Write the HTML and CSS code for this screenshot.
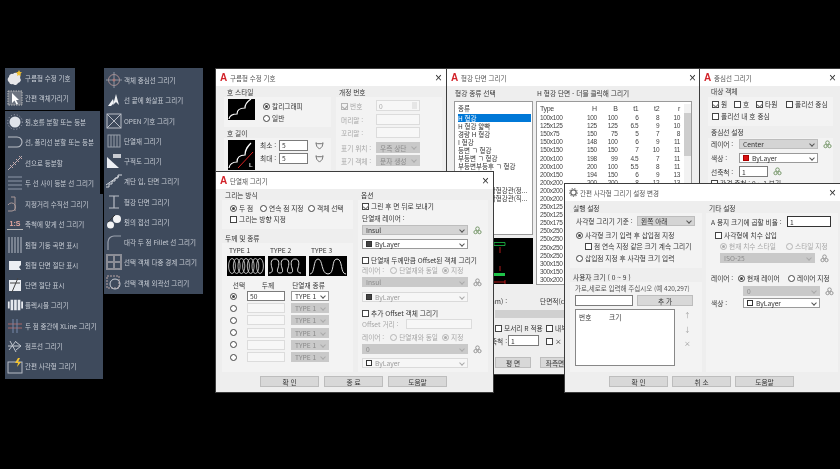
FILE: index.html
```html
<!DOCTYPE html>
<html lang="ko">
<head>
<meta charset="utf-8">
<title>AutoCAD 도구 모음</title>
<link rel="stylesheet" href="styles.css">
</head>
<body>
<svg class="defs" width="0" height="0">
  <symbol id="lay" viewBox="0 0 10 10"><circle cx="5" cy="3" r="2" fill="none" stroke="currentColor"/><circle cx="2.800" cy="6.800" r="1.800" fill="none" stroke="currentColor"/><circle cx="7.200" cy="6.800" r="1.800" fill="none" stroke="currentColor"/></symbol>
</svg>
<main class="stage">

  <nav class="bar t1">
    <div class="it"><svg viewBox="0 0 16 16"><path d="M2 7a3 3 0 0 1 4-3 3 3 0 0 1 5 0 3 3 0 0 1 2 4 3 3 0 0 1-2 5 3 3 0 0 1-5 1 3 3 0 0 1-4-2 3 3 0 0 1 0-5z" fill="#e8e8ea"/><path d="M12 0l1 2 2 .3-1.500 1.400.4 2.200-1.900-1-1.900 1 .4-2.200L9 2.300 11 2z" fill="#f2c230"/></svg><span>구름형 수정 기호</span></div>
    <div class="it"><svg viewBox="0 0 16 16"><rect x="1" y="1" width="14" height="14" fill="#6d7480" stroke="#bbb" stroke-dasharray="1.500 1"/><path d="M5 3v10l2.500-2.500 2 4 1.500-.8-2-3.700H12z" fill="#fff"/></svg><span>간편 객체가리기</span></div>
  </nav>

  <nav class="bar t2">
    <div class="it"><svg viewBox="0 0 16 16"><circle cx="8" cy="8" r="5.500" fill="#dfe3ea"/><circle cx="8" cy="8" r="7.300" fill="none" stroke="#aab" stroke-dasharray="1 2"/></svg><span>원,호를 분할 또는 등분</span></div>
    <div class="it"><svg viewBox="0 0 16 16"><path d="M1 3h9a5 5 0 0 1 0 10H1" fill="none" stroke="#b9bdc6" stroke-width="1.100"/></svg><span>선, 폴리선 분할 또는 등분</span></div>
    <div class="it"><svg viewBox="0 0 16 16"><path d="M1 15L15 1" stroke="#b9b2b8"/><path d="M3 10l3 3M6 7l3 3M9 4l3 3M12 1l3 3" stroke="#c8a8a8"/></svg><span>선으로 등분할</span></div>
    <div class="it"><svg viewBox="0 0 16 16"><path d="M1 2h14M1 6h14M1 10h14M1 14h14" stroke="#8d97a8"/></svg><span>두 선 사이 등분 선 그리기</span></div>
  </nav>

  <nav class="bar t3">
    <div class="it"><svg viewBox="0 0 16 16"><path d="M4 1h4v14M1 9a4 4 0 0 1 7 0 4 4 0 0 1-3 6H1" fill="none" stroke="#a99"/></svg><span>지정거리 수직선 그리기</span></div>
    <div class="it"><em class="ratio">1:S</em><span>축척에 맞게 선 그리기</span></div>
    <div class="it"><svg viewBox="0 0 16 16"><path d="M2 0v16M5 0v16M8 0v16M11 0v16M14 0v16" stroke="#9aa1ae" stroke-width="1.300"/></svg><span>원형 기둥 곡면 표시</span></div>
    <div class="it"><svg viewBox="0 0 16 16"><path d="M2 4h12v4l-2 2 2 3H2z" fill="#eceff3"/></svg><span>원형 단면 절단 표시</span></div>
    <div class="it"><svg viewBox="0 0 16 16"><rect x="2" y="3" width="12" height="11" fill="#eceff3"/><path d="M11 1L5 15M3 6h10" stroke="#444"/></svg><span>단면 절단 표시</span></div>
    <div class="it"><svg viewBox="0 0 18 16"><path d="M1 4h2v8H1zM4 2h3v12H4zM8 2h3v12H8zM12 2h3v12h-3zM16 4h2v8h-2z" fill="#e6e9ee"/></svg><span>플렉시블 그리기</span></div>
    <div class="it"><svg viewBox="0 0 16 16"><path d="M1 6h14M1 10h14" stroke="#a66"/><path d="M6 1v14M10 1v14" stroke="#78a"/></svg><span>두 점 중간에 XLine 그리기</span></div>
    <div class="it"><svg viewBox="0 0 16 16"><path d="M1 8h13M9 4l5 4-5 4M2 12l7-9M3 3l6 11" fill="none" stroke="#c3c8d0"/></svg><span>점프선 그리기</span></div>
    <div class="it"><svg viewBox="0 0 16 16"><rect x="1" y="4" width="14" height="11" fill="none" stroke="#b7bcc6"/><path d="M11 0L8 5h3l-1 4 4-5h-3l2-4z" fill="#f2c230"/></svg><span>간편 사각형 그리기</span></div>
  </nav>

  <nav class="bar t4">
    <div class="it"><svg viewBox="0 0 16 16"><circle cx="8" cy="8" r="5.500" fill="none" stroke="#a98d8f"/><path d="M8 0v16M0 8h16" stroke="#8f95a2"/><circle cx="8" cy="8" r="1.500" fill="#a77"/></svg><span>객체 중심선 그리기</span></div>
    <div class="it"><svg viewBox="0 0 16 16"><path d="M10 2L7 13l3-3 3 3zM2 14l5-7 1 4-3 3z" fill="#f0f2f5"/></svg><span>선 끝에 화살표 그리기</span></div>
    <div class="it"><svg viewBox="0 0 16 16"><rect x="1" y="1" width="14" height="14" fill="none" stroke="#b9bdc6"/><path d="M1 1l14 14M15 1L1 15" stroke="#b9bdc6"/></svg><span>OPEN 기호 그리기</span></div>
    <div class="it"><svg viewBox="0 0 16 16"><rect x="2" y="2" width="12" height="12" fill="none" stroke="#989faa"/><path d="M5 2v12M8 2v12M11 2v12" stroke="#989faa"/></svg><span>단열재 그리기</span></div>
    <div class="it"><svg viewBox="0 0 16 16"><path d="M1 4v11h12z" fill="#eceff3"/><rect x="7" y="1" width="8" height="4" fill="#c9ccd2"/></svg><span>구적도 그리기</span></div>
    <div class="it"><svg viewBox="0 0 16 16"><path d="M0 14h3v-3h3V8h3V5h3V2h4M0 12l13-9" fill="none" stroke="#d3d6dc"/></svg><span>계단 입, 단면 그리기</span></div>
    <div class="it"><svg viewBox="0 0 16 16"><path d="M3 2h10M3 14h10M8 2v12" fill="none" stroke="#b9bdc6" stroke-width="1.200"/></svg><span>형강 단면 그리기</span></div>
    <div class="it"><svg viewBox="0 0 16 16"><circle cx="11" cy="5" r="4" fill="#f2f3f5"/><circle cx="4.500" cy="11" r="3.500" fill="#f2f3f5"/><path d="M2 8l7-7" stroke="#333"/></svg><span>원의 접선 그리기</span></div>
    <div class="it"><svg viewBox="0 0 16 16"><path d="M2 16V8a6 6 0 0 1 6-6h7" fill="none" stroke="#9aa1ae" stroke-width="1.200"/></svg><span>대각 두 점 Fillet 선 그리기</span></div>
    <div class="it"><svg viewBox="0 0 16 16"><rect x="0" y="0" width="16" height="16" fill="#8b8d96"/><path d="M2 2h5v5H2zM9 2h5v5H9zM2 9h5v5H2zM9 9h5v5H9z" fill="#3e4a5c"/></svg><span>선택 객체 다중 경계 그리기</span></div>
    <div class="it"><svg viewBox="0 0 16 16"><rect x="1" y="1" width="12" height="12" fill="none" stroke="#b9a5a5" stroke-dasharray="2 1"/><circle cx="9" cy="9" r="5" fill="none" stroke="#c8ccd4"/></svg><span>선택 객체 외곽선 그리기</span></div>
  </nav>

  <!-- 구름형 수정 기호 -->
  <section class="win w1">
    <header class="tb"><b class="logo">A</b><span>구름형 수정 기호</span><i class="x">×</i></header>
    <div class="w1-body">
      <div class="col">
        <h4>호 스타일</h4>
        <div class="panel p-style">
          <svg class="pv" viewBox="0 0 27 21"><rect width="27" height="21"/><path d="M1 20c1-5 6-5 8-5 0-5 4-6 8-6 0-4 3-7 6-9" fill="none" stroke="#fff" stroke-width="1.200"/></svg>
          <div class="stack"><div class="r"><i class="rad on"></i>칼리그래피</div><div class="r"><i class="rad"></i>일반</div></div>
        </div>
        <h4 class="mt1">호 길이</h4>
        <div class="panel p-len">
          <svg class="pv tall" viewBox="0 0 27 30"><rect width="27" height="30"/><path d="M1 28c1-6 6-6 8-6 0-6 4-7 8-7 0-6 3-9 6-12" fill="none" stroke="#fff" stroke-width="1.200"/><path d="M10 28L25 12" stroke="#d22"/><text x="21" y="27" class="ltr">L</text></svg>
          <div class="stack gap3">
            <div class="r">최소 :<span class="inp i29">5</span><svg class="ic" viewBox="0 0 10 10"><path d="M1 2l2 1h4l2-1-1 4-3 3-3-3z" fill="none" stroke="#666"/></svg></div>
            <div class="r">최대 :<span class="inp i29">5</span><svg class="ic" viewBox="0 0 10 10"><path d="M1 2l2 1h4l2-1-1 4-3 3-3-3z" fill="none" stroke="#666"/></svg></div>
          </div>
        </div>
      </div>
      <div class="col c-rev">
        <h4>개정 번호</h4>
        <div class="panel p-rev">
          <div class="fr dis"><span class="lb38"><i class="chk tick"></i>번호</span><span class="inp dis-inp i44">0 <u class="spin"></u></span></div>
          <div class="fr dis mt3"><span class="lb38">머리말 :</span><span class="inp dis-inp i44"></span></div>
          <div class="fr dis mt2"><span class="lb38">꼬리말 :</span><span class="inp dis-inp i44"></span></div>
          <div class="fr dis mt4"><span class="lb38">표기 위치 :</span><span class="sel off i44">우측 상단</span></div>
          <div class="fr dis mt2"><span class="lb38">표기 객체 :</span><span class="sel off i44">문자 생성</span></div>
        </div>
      </div>
    </div>
  </section>

  <!-- 형강 단면 그리기 -->
  <section class="win w2">
    <header class="tb"><b class="logo">A</b><span>형강 단면 그리기</span><i class="x">×</i></header>
    <div class="w2-heads"><h4>형강 종류 선택</h4><h4>H 형강 단면 - 더블 클릭해 그리기</h4></div>
    <div class="w2-main">
      <div class="w2-left">
        <div class="list">
          <div class="li head">종류</div>
          <div class="li cur">H 형강</div>
          <div class="li">H 형강 얇빡</div>
          <div class="li">경량 H 형강</div>
          <div class="li">I 형강</div>
          <div class="li">등변 ㄱ 형강</div>
          <div class="li">부등변 ㄱ 형강</div>
          <div class="li">부등변부등후 ㄱ 형강</div>
          <div class="li"></div>
          <div class="li"></div>
          <div class="li">일반구조용 각형강관(정...</div>
          <div class="li">일반구조용 각형강관(직...</div>
        </div>
        <svg class="beam" viewBox="0 0 39 46"><rect width="39" height="46"/><path d="M0 4.500h11v3H0z" fill="none" stroke="#1fc44a" stroke-width=".8"/><rect x="0" y="35" width="11" height="3" fill="#1fc44a"/><path d="M6 9v6M6 28v5M0 44h11M11 42v4" stroke="#d22" stroke-width=".8"/></svg>
      </div>
      <div class="tblbox">
        <table class="steel">
          <thead><tr><th>Type</th><th>H</th><th>B</th><th>t1</th><th>t2</th><th>r</th></tr></thead>
          <tbody>
            <tr><td>100x100</td><td>100</td><td>100</td><td>6</td><td>8</td><td>10</td></tr>
            <tr><td>125x125</td><td>125</td><td>125</td><td>6.5</td><td>9</td><td>10</td></tr>
            <tr><td>150x75</td><td>150</td><td>75</td><td>5</td><td>7</td><td>8</td></tr>
            <tr><td>150x100</td><td>148</td><td>100</td><td>6</td><td>9</td><td>11</td></tr>
            <tr><td>150x150</td><td>150</td><td>150</td><td>7</td><td>10</td><td>11</td></tr>
            <tr><td>200x100</td><td>198</td><td>99</td><td>4.5</td><td>7</td><td>11</td></tr>
            <tr><td>200x100</td><td>200</td><td>100</td><td>5.5</td><td>8</td><td>11</td></tr>
            <tr><td>200x150</td><td>194</td><td>150</td><td>6</td><td>9</td><td>13</td></tr>
            <tr><td>200x200</td><td>200</td><td>200</td><td>8</td><td>12</td><td>13</td></tr>
            <tr><td>200x200</td><td></td><td></td><td></td><td></td><td></td></tr>
            <tr><td>200x200</td><td></td><td></td><td></td><td></td><td></td></tr>
            <tr><td>250x125</td><td></td><td></td><td></td><td></td><td></td></tr>
            <tr><td>250x125</td><td></td><td></td><td></td><td></td><td></td></tr>
            <tr><td>250x175</td><td></td><td></td><td></td><td></td><td></td></tr>
            <tr><td>250x250</td><td></td><td></td><td></td><td></td><td></td></tr>
            <tr><td>250x250</td><td></td><td></td><td></td><td></td><td></td></tr>
            <tr><td>250x250</td><td></td><td></td><td></td><td></td><td></td></tr>
            <tr><td>250x250</td><td></td><td></td><td></td><td></td><td></td></tr>
            <tr><td>300x150</td><td></td><td></td><td></td><td></td><td></td></tr>
            <tr><td>300x150</td><td></td><td></td><td></td><td></td><td></td></tr>
            <tr><td>300x200</td><td></td><td></td><td></td><td></td><td></td></tr>
          </tbody>
        </table>
        <div class="sb"><i class="thumb"></i></div>
      </div>
    </div>
    <div class="w2-foot">
      <div class="fr"><span class="lb86">길이(mm) :</span><span>단면적(cm2) :</span></div>
      <div class="greyline"></div>
      <div class="fr mt5"><span class="lb41"></span><span class="w51"><i class="chk"></i>모서리 R 적용</span><span><i class="chk"></i>내부 R 적용</span></div>
      <div class="fr mt2"><span class="lb54">축척 :</span><span class="inp i31">1</span><span class="w51 ml7"><i class="chk"></i>× 대칭</span></div>
      <div class="fr mt11"><span class="lb41"></span><span class="btn b36">평 면</span><span class="btn b30">좌측면</span></div>
    </div>
  </section>

  <!-- 중심선 그리기 -->
  <section class="win w3">
    <header class="tb"><b class="logo">A</b><span>중심선 그리기</span><i class="x">×</i></header>
    <div class="w3-body">
      <h4>대상 객체</h4>
      <div class="panel p-target">
        <div class="r w3-row"><span class="w22"><i class="chk tick"></i>원</span><span class="w22"><i class="chk"></i>호</span><span class="w30"><i class="chk tick"></i>타원</span><span><i class="chk"></i>폴리선 중심</span></div>
        <div class="r"><i class="chk"></i>폴리선 내 호 중심</div>
      </div>
      <h4 class="mt1">중심선 설정</h4>
      <div class="panel p-cset">
        <div class="fr"><span class="lb28">레이어 :</span><span class="sel g i79">Center</span><svg class="lay"><use href="#lay"/></svg></div>
        <div class="fr mt4"><span class="lb28">색상 :</span><span class="sel i79"><i class="sw red"></i>ByLayer</span></div>
        <div class="fr mt3"><span class="lb28">선축척 :</span><span class="inp i29">1</span><svg class="lay"><use href="#lay"/></svg></div>
        <div class="r mt1"><i class="chk"></i>간격 축척 : 0 ~ 1 보기</div>
      </div>
    </div>
  </section>

  <!-- 단열재 그리기 -->
  <section class="win w4">
    <header class="tb"><b class="logo">A</b><span>단열재 그리기</span><i class="x">×</i></header>
    <div class="w4-body">
      <div class="col">
        <h4>그리는 방식</h4>
        <div class="panel p-way">
          <div class="r"><span class="w30"><i class="rad on"></i>두 점</span><span class="w48"><i class="rad"></i>연속 점 지정</span><span><i class="rad"></i>객체 선택</span></div>
          <div class="r mt1"><i class="chk"></i>그리는 방향 지정</div>
        </div>
        <h4 class="mt4">두께 및 종류</h4>
        <div class="panel p-thick">
          <div class="types"><span>TYPE 1</span><span>TYPE 2</span><span>TYPE 3</span></div>
          <div class="type-imgs">
            <svg viewBox="0 0 38 20"><rect width="38" height="20"/><g fill="none" stroke="#ddd" stroke-width=".8"><ellipse cx="5" cy="10" rx="3.400" ry="7.500"/><ellipse cx="9.700" cy="10" rx="3.400" ry="7.500"/><ellipse cx="14.400" cy="10" rx="3.400" ry="7.500"/><ellipse cx="19" cy="10" rx="3.400" ry="7.500"/><ellipse cx="23.700" cy="10" rx="3.400" ry="7.500"/><ellipse cx="28.400" cy="10" rx="3.400" ry="7.500"/><ellipse cx="33" cy="10" rx="3.400" ry="7.500"/></g></svg>
            <svg viewBox="0 0 38 20"><rect width="38" height="20"/><path d="M1 17c3 0 4-2 3-5S2 3 7 3s4 6 3 9-1 5 2 5 3-2 2-5-2-9 3-9 4 6 3 9-1 5 2 5 3-2 2-5-2-9 3-9 4 6 3 9 0 5 3 5" fill="none" stroke="#ddd"/></svg>
            <svg viewBox="0 0 38 20"><rect width="38" height="20"/><path d="M1 18c5 0 3-15 8-15s3 15 10 15 3-15 9-15 3 15 9 15" fill="none" stroke="#ddd"/></svg>
          </div>
          <div class="tgrid hd"><span>선택</span><span>두께</span><span>단열재 종류</span></div>
          <div class="tgrid"><i class="rad on"></i><span class="inp i38">50</span><span class="sel i38">TYPE 1</span></div>
          <div class="tgrid"><i class="rad"></i><span class="inp dis-inp i38"></span><span class="sel off i38">TYPE 1</span></div>
          <div class="tgrid"><i class="rad"></i><span class="inp dis-inp i38"></span><span class="sel off i38">TYPE 1</span></div>
          <div class="tgrid"><i class="rad"></i><span class="inp dis-inp i38"></span><span class="sel off i38">TYPE 1</span></div>
          <div class="tgrid"><i class="rad"></i><span class="inp dis-inp i38"></span><span class="sel off i38">TYPE 1</span></div>
          <div class="tgrid"><i class="rad"></i><span class="inp dis-inp i38"></span><span class="sel off i38">TYPE 1</span></div>
        </div>
      </div>
      <div class="col">
        <h4>옵션</h4>
        <div class="panel p-opt">
          <div class="r"><i class="chk tick"></i>그린 후 면 뒤로 보내기</div>
          <div class="r mt2">단열재 레이어 :</div>
          <div class="fr mt2"><span class="sel g i106">Insul</span><svg class="lay"><use href="#lay"/></svg></div>
          <div class="fr mt4"><span class="sel i106"><i class="sw dk"></i>ByLayer</span></div>
          <div class="r mt6"><i class="chk"></i>단열재 두께만큼 Offset된 객체 그리기</div>
          <div class="r dis">레이어 :<span class="mlr"><i class="rad"></i>단열재와 동일</span><span><i class="rad on"></i>지정</span></div>
          <div class="fr mt2"><span class="sel off i106">Insul</span><svg class="lay off-ic"><use href="#lay"/></svg></div>
          <div class="fr mt5"><span class="sel dimd i106"><i class="sw dk"></i>ByLayer</span></div>
          <div class="r mt6"><i class="chk"></i>추가 Offset 객체 그리기</div>
          <div class="fr dis mt1"><span class="lb40">Offset 거리 :</span><span class="inp dis-inp i66"></span></div>
          <div class="r dis mt3">레이어 :<span class="mlr"><i class="rad"></i>단열재와 동일</span><span><i class="rad on"></i>지정</span></div>
          <div class="fr mt2"><span class="sel off i106">0</span><svg class="lay off-ic"><use href="#lay"/></svg></div>
          <div class="fr mt4"><span class="sel dimd i106"><i class="sw wh"></i>ByLayer</span></div>
        </div>
      </div>
    </div>
    <footer class="btns b4"><span class="btn">확 인</span><span class="btn">종 료</span><span class="btn">도움말</span></footer>
  </section>

  <!-- 간편 사각형 그리기 설정 변경 -->
  <section class="win w5">
    <header class="tb"><svg class="gear" viewBox="0 0 10 10"><circle cx="5" cy="5" r="3" fill="none" stroke="#666" stroke-width="1.400"/><circle cx="5" cy="5" r="4.400" fill="none" stroke="#888" stroke-width="1.200" stroke-dasharray="1.500 1.500"/></svg><span>간편 사각형 그리기 설정 변경</span><i class="x">×</i></header>
    <div class="w5-body">
      <div class="col">
        <h4>실행 설정</h4>
        <div class="panel p-run">
          <div class="fr"><span class="lb61">사각형 그리기 기준 :</span><span class="sel g i58">왼쪽 아래</span></div>
          <div class="r mt4"><i class="rad on"></i>사각형 크기 입력 후 삽입점 지정</div>
          <div class="r mt1 ind"><i class="chk"></i>점 연속 지정 같은 크기 계속 그리기</div>
          <div class="r mt2"><i class="rad"></i>삽입점 지정 후 사각형 크기 입력</div>
        </div>
        <h4 class="mt4">사용자 크기 ( 0 ~ 9 )</h4>
        <div class="panel p-user">
          <div class="r hint">가로,세로로 입력해 주십시오 (예 420,297)</div>
          <div class="fr mt2"><span class="inp i58"></span><span class="btn b56">추 가</span></div>
          <div class="fr mt3 top">
            <div class="sizes"><div class="sz-h"><span>번호</span><span>크기</span></div></div>
            <div class="arrows"><span>↑</span><span>↓</span><span>×</span></div>
          </div>
        </div>
      </div>
      <div class="col">
        <h4>기타 설정</h4>
        <div class="panel p-etc">
          <div class="fr"><span class="lb76">A 용지 크기에 곱할 비율 :</span><span class="inp i44 blk">1</span></div>
          <div class="r mt3 ind2"><i class="chk"></i>사각형에 치수 삽입</div>
          <div class="r dis mt1 ind3"><span class="w66"><i class="rad on"></i>현재 치수 스타일</span><span><i class="rad"></i>스타일 지정</span></div>
          <div class="fr mt2 ind3"><span class="sel off i95">ISO-25</span><svg class="lay off-ic"><use href="#lay"/></svg></div>
          <div class="r mt10"><span class="lb27">레이어 :</span><span class="w50"><i class="rad on"></i>현재 레이어</span><span><i class="rad"></i>레이어 지정</span></div>
          <div class="fr mt3"><span class="lb32"></span><span class="sel off i77">0</span><svg class="lay off-ic"><use href="#lay"/></svg></div>
          <div class="fr mt2"><span class="lb32">색상 :</span><span class="sel i77"><i class="sw wh"></i>ByLayer</span></div>
        </div>
      </div>
    </div>
    <footer class="btns b5"><span class="btn">확 인</span><span class="btn">취 소</span><span class="btn">도움말</span></footer>
  </section>
</main>
</body>
</html>
```

FILE: styles.css
```css
* { box-sizing: border-box; }
html, body { margin: 0; background: #000; height: 100%; overflow: hidden; }
.defs { position: absolute; }
.stage {
  position: relative; width: 840px; height: 469px; background: #000;
  font: 400 6.7px/10px "Noto Sans CJK KR", "Noto Sans", sans-serif; color: #333;
  filter: blur(.35px);
}

/* toolbars */
.bar { position: absolute; display: flex; flex-direction: column; background: #3e4a5c; color: #c8cdd5; font-size: 6.5px; }
.t1 { left: 5px; top: 68px; width: 70px; height: 42px; z-index: 2; }
.t2 { left: 5px; top: 111px; width: 95px; height: 83px; padding-top: 1px; z-index: 3; }
.t3 { left: 5px; top: 194px; width: 98px; height: 185px; }
.t4 { left: 104px; top: 68px; width: 99px; height: 226px; padding-top: 2px; }
.it { display: flex; align-items: center; gap: 2px; height: 20.25px; padding-left: 2px; white-space: nowrap; }
.it svg { width: 16px; height: 16px; flex: none; }
.ratio { width: 16px; font: 700 7px/10px "Liberation Sans", sans-serif; color: #e6a9a0; border-bottom: 1px solid #bbb; text-align: center; }

/* windows */
.win { position: absolute; display: flex; flex-direction: column; background: #eeeeee; border: 1px solid #3c3c3c; overflow: hidden; }
.w1 { left: 215px; top: 68px; width: 232px; height: 105px; z-index: 1; }
.w2 { left: 446px; top: 68px; width: 255px; height: 307px; z-index: 1; }
.w3 { left: 699px; top: 68px; width: 141px; height: 120px; z-index: 2; border-right: 0; }
.w4 { left: 215px; top: 171px; width: 279px; height: 222px; z-index: 4; }
.w5 { left: 564px; top: 183px; width: 276px; height: 210px; z-index: 4; border-right: 0; }
.tb { display: flex; align-items: center; gap: 3px; height: 17px; flex: none; padding: 0 4px; background: #fff; color: #555; font-size: 6.5px; }
.tb span { flex: 1; }
.logo { font: 700 10px/10px "Liberation Sans", sans-serif; color: #d2232a; width: 7px; }
.x { font: 400 12px/10px "Liberation Sans", sans-serif; color: #333; }
.gear { width: 9px; height: 9px; flex: none; margin-right: -1px; }

h4 { margin: 0; height: 10px; font: 400 6.7px/10px "Noto Sans CJK KR", sans-serif; color: #333; padding-left: 3px; white-space: nowrap; }
.panel { background: #f3f3f3; }
.col { display: flex; flex-direction: column; }
.r { display: flex; align-items: center; height: 10px; white-space: nowrap; }
.fr { display: flex; align-items: center; white-space: nowrap; }
.fr.top { align-items: flex-start; }
.stack { display: flex; flex-direction: column; }
.gap3 { gap: 3px; }
.dis { color: #a6a6a6; }

.mt1 { margin-top: 1px; } .mt2 { margin-top: 2px; } .mt3 { margin-top: 3px; } .mt4 { margin-top: 4px; }
.mt5 { margin-top: 5px; } .mt6 { margin-top: 6px; } .mt10 { margin-top: 10px; } .mt11 { margin-top: 11px; } .ml7 { margin-left: 7px; }

/* controls */
.chk, .rad { display: inline-block; width: 7px; height: 7px; flex: none; margin-right: 2px; border: 1px solid #444; background: #fff; vertical-align: -1px; position: relative; }
.rad { border-radius: 50%; }
.rad.on::after { content: ""; position: absolute; inset: 1px; border-radius: 50%; background: #444; }
.chk.tick::after { content: ""; position: absolute; left: 1px; top: 0; width: 3px; height: 4px; border: solid #777; border-width: 0 1px 1px 0; transform: rotate(40deg); }
.dis .chk, .dis .rad { border-color: #b5b5b5; background: #f2f2f2; }
.dis .chk.tick::after { border-color: #aaa; }
.dis .rad.on::after { background: #aaa; }
.inp { display: inline-flex; align-items: center; height: 11px; padding: 0 2px; background: #fff; border: 1px solid #7b7b7b; color: #333; }
.dis-inp { background: #f7f7f7; border-color: #dcdcdc; color: #aaa; justify-content: space-between; }
.blk { border-color: #333; }
.sel { position: relative; display: inline-flex; align-items: center; height: 10px; padding-left: 3px; background: #fff; border: 1px solid #9a9a9a; color: #333; }
.sel::after { content: ""; position: absolute; right: 3px; top: 2px; width: 3px; height: 3px; border: solid #555; border-width: 0 1px 1px 0; transform: rotate(45deg); }
.sel.g { background: #d4d4d4; border-color: #bdbdbd; }
.sel.off { background: #c9c9c9; border-color: #c9c9c9; color: #8a8a8a; }
.sel.off::after { border-color: #aaa; }
.sel.dimd { background: #f6f6f6; border-color: #dadada; color: #9a9a9a; }
.sel.dimd::after { border-color: #aaa; }
.sw { width: 6px; height: 6px; margin-right: 3px; border: 1px solid #333; flex: none; }
.sw.red { background: #d81010; border-color: #a00; }
.sw.dk { background: #444; }
.sw.wh { background: #fff; }
.btn { display: inline-flex; align-items: center; justify-content: center; height: 11px; background: #d8d8d8; border: 1px solid #bdbdbd; color: #333; }
.btns { display: flex; justify-content: flex-start; gap: 5px; }
.b4 { padding: 4px 0 0 44px; }
.b5 { padding: 4px 0 0 44px; gap: 4px; }
.btns .btn { width: 59px; }
.lay { width: 9px; height: 9px; margin-left: 5px; color: #6b8f5e; flex: none; }
.off-ic { color: #8c8c8c; }
.i29 { width: 29px; } .i31 { width: 31px; } .i38 { width: 38px; } .i44 { width: 44px; } .i58 { width: 58px; }
.i66 { width: 66px; } .i77 { width: 77px; } .i79 { width: 79px; } .i95 { width: 95px; } .i106 { width: 106px; }
.w22 { width: 22px; } .w30 { width: 30px; } .w48 { width: 48px; } .w50 { width: 50px; } .w51 { width: 51px; } .w66 { width: 66px; }
.lb27 { width: 27px; } .lb28 { width: 28px; } .lb32 { width: 32px; } .lb38 { width: 35px; } .lb40 { width: 44px; } .lb41 { width: 41px; }
.lb54 { width: 54px; text-align: right; padding-right: 1px; } .lb61 { width: 61px; } .lb76 { width: 76px; } .lb86 { width: 86px; text-align: right; padding-right: 33px; }

/* w1 */
.w1-body { display: flex; gap: 5px; padding: 1px 0 0 8px; }
.w1-body > .col { width: 107px; }
.w1-body .c-rev { width: 106px; }
.p-style { display: flex; gap: 8px; height: 30px; padding: 2px 0 0 4px; align-items: flex-start; }
.p-style .stack { padding-top: 2px; gap: 2px; }
.pv { width: 27px; height: 21px; flex: none; }
.pv.tall { height: 30px; }
.ltr { font: 700 6px "Liberation Sans", sans-serif; fill: #ddd; }
.p-len { display: flex; gap: 5px; height: 32px; padding: 2px 0 0 4px; }
.p-len .inp { margin: 0 7px 0 3px; }
.ic { width: 9px; height: 9px; }
.p-rev { height: 73px; padding: 3px 0 0 5px; }
.spin { width: 5px; height: 7px; background: #e6e6e6; }
.p-rev .inp, .p-rev .sel { height: 11px; }

/* w2 */
.w2-heads { display: flex; padding: 2px 0 0 5px; height: 13px; }
.w2-heads h4:first-child { width: 82px; }
.w2-main { display: flex; gap: 3px; padding: 2px 0 0 7px; }
.w2-left { width: 79px; display: flex; flex-direction: column; gap: 3px; align-items: flex-end; }
.list { width: 79px; height: 134px; background: #fff; border: 1px solid #9a9a9a; padding: 2px 1px 0 3px; overflow: hidden; }
.li { height: 8.1px; font-size: 6.5px; line-height: 8px; white-space: nowrap; }
.li.head { height: 9.5px; }
.li.cur { background: #0078d7; color: #fff; }
.beam { width: 39px; height: 46px; }
.tblbox { display: flex; width: 156px; height: 184px; background: #fff; border: 1px solid #9a9a9a; overflow: hidden; padding-top: 2px; }
.steel { border-collapse: collapse; table-layout: fixed; width: 147px; align-self: flex-start; font: 400 6.5px/8px "Liberation Sans", sans-serif; letter-spacing: -.35px; color: #444; }
.steel th { font-weight: 400; height: 10px; text-align: right; font-size: 7px; padding: 0 3px 0 0; }
.steel td { height: 8.1px; text-align: right; padding: 0 3px 0 0; }
.steel th:first-child, .steel td:first-child { text-align: left; width: 42px; padding: 0 0 0 3px; }
.sb { flex: none; width: 7px; margin-left: 1px; background: #f2f2f2; }
.thumb { display: block; width: 7px; height: 43px; margin-top: 9px; background: #cdcdcd; }
.w2-foot { padding: 11px 0 0 7px; }
.greyline { width: 150px; height: 8px; margin: 4px 0 0 41px; background: #d0d0d0; }
.b36 { width: 36px; margin-right: 9px; }
.b30 { width: 30px; }

/* w3 */
.w3-body { display: flex; flex-direction: column; padding: 0 0 0 8px; }
.p-target { padding: 2px 0 0 4px; height: 29px; width: 125px; margin-top: 1px; }
.w3-row { margin-bottom: 2px; }
.p-cset { padding: 1px 0 0 3px; height: 60px; width: 125px; margin-top: 1px; }

/* w4 */
.w4-body { display: grid; grid-template-columns: 131px 130px; gap: 5px; padding: 1px 0 0 6px; }
.p-way { height: 29px; padding: 3px 0 0 8px; }
.p-thick { height: 129px; padding: 2px 0 0 5px; }
.types { display: grid; grid-template-columns: repeat(3, 41px); height: 10px; padding-left: 2px; }
.type-imgs { display: flex; gap: 3px; margin-top: 1px; }
.type-imgs svg { width: 38px; height: 20px; }
.tgrid { display: grid; grid-template-columns: 17px 44px 40px; align-items: center; height: 12.2px; padding-left: 3px; }
.tgrid .rad { margin: 0; }
.tgrid .inp, .tgrid .sel { height: 10px; }
.tgrid.hd { margin-top: 4px; height: 10px; padding-left: 2px; text-align: center; grid-template-columns: 20px 38px 43px; }
.p-opt { height: 172px; padding: 1px 0 0 4px; }
.p-opt .sel { height: 10px; }
.mlr { margin: 0 4px 0 6px; }
.p-opt .inp { height: 10px; }

/* w5 */
.w5-body { display: grid; grid-template-columns: 132px 132px; gap: 4px; padding: 2px 0 0 5px; }
.p-run { height: 55px; padding: 3px 0 0 6px; }
.ind { padding-left: 9px; }
.p-user { height: 90px; padding: 1px 0 0 5px; }
.hint { color: #555; font-size: 6.5px; }
.p-user .btn { margin-left: 4px; }
.b56 { width: 56px; }
.sizes { width: 100px; height: 57px; background: #fff; border: 1px solid #888; padding: 2px 0 0 3px; }
.sz-h { display: grid; grid-template-columns: 30px 1fr; height: 10px; }
.arrows { display: flex; flex-direction: column; gap: 4px; margin-left: 9px; padding-top: 1px; color: #999; }
.p-etc { height: 159px; padding: 3px 0 0 5px; }
.ind2 { padding-left: 4px; }
.ind3 { padding-left: 9px; }
```
